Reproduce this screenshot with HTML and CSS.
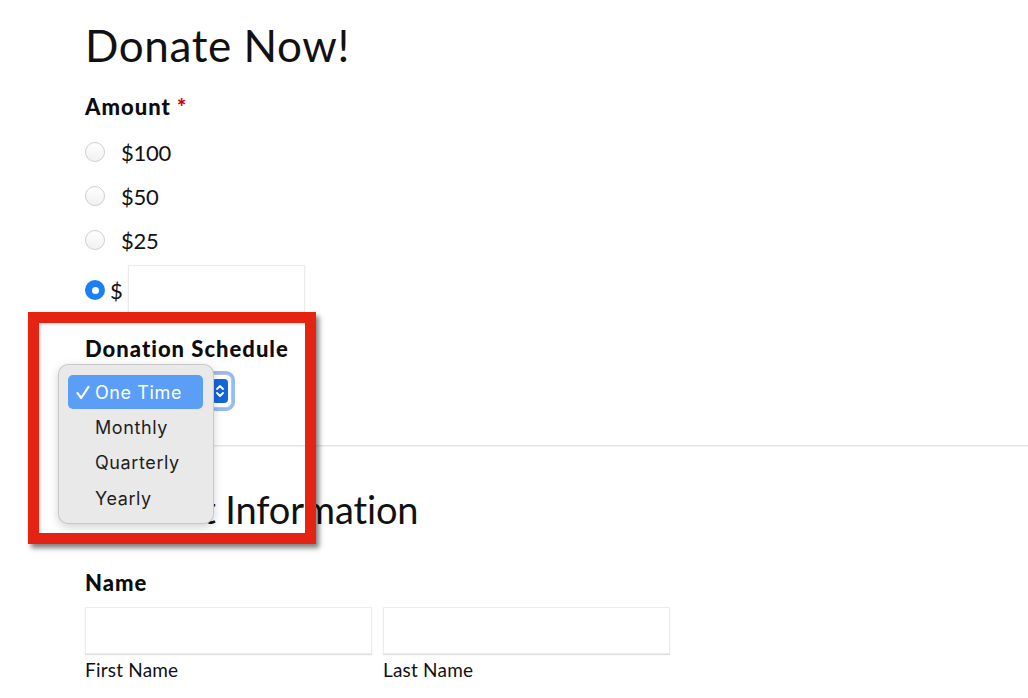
FILE: index.html
```html
<!DOCTYPE html>
<html lang="en">
<head>
<meta charset="utf-8">
<title>Donate Now!</title>
<link rel="stylesheet" href="styles.css">
</head>
<body>
<main class="page">
  <h1 class="title">Donate Now!</h1>

  <div class="label">Amount <span class="req">*</span></div>
  <div class="choices">
    <label class="choice"><span class="radio"></span><span class="choice-text">$100</span></label>
    <label class="choice"><span class="radio"></span><span class="choice-text">$50</span></label>
    <label class="choice"><span class="radio"></span><span class="choice-text">$25</span></label>
    <label class="choice custom"><span class="radio checked"></span><span class="dollar">$</span><span class="field amount-field"></span></label>
  </div>

  <div class="label schedule-label">Donation Schedule</div>
  <div class="select">
    <span class="select-value">One Time</span>
    <span class="select-arrow">
      <svg width="8" height="14" viewBox="0 0 8 14"><path d="M1 5 L4 2 L7 5 M1 9 L4 12 L7 9" fill="none" stroke="#fff" stroke-width="1.8" stroke-linecap="round" stroke-linejoin="round"/></svg>
    </span>
  </div>

  <hr class="divider">

  <h2 class="subtitle">Contact Information</h2>

  <div class="label name-label">Name</div>
  <div class="name-row">
    <div class="name-col"><span class="field name-field"></span><span class="sub">First Name</span></div>
    <div class="name-col"><span class="field name-field"></span><span class="sub">Last Name</span></div>
  </div>
</main>

<div class="menu">
  <div class="menu-item active"><span class="check"><svg width="14" height="15" viewBox="0 0 14 15"><path d="M1.5 8.2 L5.2 13 L12.5 1.8" fill="none" stroke="#fff" stroke-width="2.2" stroke-linecap="round" stroke-linejoin="round"/></svg></span>One Time</div>
  <div class="menu-item">Monthly</div>
  <div class="menu-item">Quarterly</div>
  <div class="menu-item">Yearly</div>
</div>

<div class="highlight-box"></div>
</body>
</html>
```

FILE: styles.css
```css
* { box-sizing: border-box; }
html, body { margin: 0; padding: 0; background: #fff; }
body {
  font-family: Lato, "Open Sans", sans-serif;
  color: #111;
  width: 1028px;
  height: 698px;
  overflow: hidden;
  position: relative;
}
.page {
  padding-left: 85px;
  padding-top: 19px;
}
.title {
  margin: 0;
  font-size: 44px;
  font-weight: 400;
  line-height: 53px;
  letter-spacing: 0.6px;
  color: #111;
}
.label {
  font-size: 22px;
  font-weight: 900;
  line-height: 25px;
  letter-spacing: 1px;
  color: #0c0c0c;
}
.title + .label { margin-top: 22px; }
.req { color: #c00; }
.choices {
  margin-top: 11px;
  display: flex;
  flex-direction: column;
}
.choice {
  display: flex;
  align-items: center;
  height: 44px;
}
.radio {
  width: 20px;
  height: 20px;
  border-radius: 50%;
  border: 1px solid #cfcfcf;
  background: linear-gradient(#ffffff, #f1f1f1);
  flex: none;
}
.radio.checked {
  border: none;
  background: #1b7ff9;
  position: relative;
}
.radio.checked::after {
  content: "";
  position: absolute;
  left: 6.5px;
  top: 6.5px;
  width: 7px;
  height: 7px;
  border-radius: 50%;
  background: #fff;
}
.choice-text {
  margin-left: 16px;
  font-size: 22px;
  letter-spacing: -0.3px;
}
.custom {
  height: 52px;
  margin-top: 2px;
}
.dollar {
  margin-left: 5px;
  font-size: 22px;
}
.field {
  display: block;
  border: 1px solid #ececec;
  box-shadow: 0 1px 1px rgba(0,0,0,0.12);
  background: #fff;
}
.amount-field {
  margin-left: 5px;
  width: 177px;
  height: 50px;
}
.schedule-label { margin-top: 20px; }
.select {
  margin-top: 13px;
  margin-left: -10px;
  width: 157px;
  height: 34px;
  border: 1px solid #c4c4c4;
  border-radius: 6px;
  box-shadow: 0 0 0 3px rgba(60,130,240,0.55);
  display: flex;
  align-items: center;
  justify-content: space-between;
  padding: 0 3px 0 10px;
  background: #fff;
  font-family: Inter, sans-serif;
  font-size: 16px;
}
.select-arrow {
  width: 16px;
  height: 24px;
  border-radius: 4px;
  background: #1665d8;
  display: flex;
  align-items: center;
  justify-content: center;
}
.divider {
  margin: 37px 0 0 0;
  border: none;
  border-top: 1px solid #e3e3e3;
  border-bottom: 1px solid #f2f2f2;
  width: 943px;
}
.subtitle {
  margin: 40px 0 0 0;
  font-size: 38px;
  font-weight: 400;
  line-height: 44px;
  letter-spacing: -0.15px;
  color: #111;
}
.name-label { margin-top: 39px; }
.name-row {
  margin-top: 12px;
  display: flex;
  gap: 11px;
}
.name-col {
  display: flex;
  flex-direction: column;
  width: 287px;
}
.name-field { height: 47px; }
.sub {
  font-size: 19px;
  line-height: 24px;
  margin-top: 4px;
  letter-spacing: 0.2px;
  color: #111;
}
.menu {
  position: absolute;
  left: 58px;
  top: 364px;
  width: 156px;
  height: 160px;
  padding: 10px 10px 10px 9px;
  border-radius: 10px;
  background: #e9e9e9;
  border: 1px solid rgba(0,0,0,0.14);
  box-shadow: 0 3px 10px rgba(0,0,0,0.18);
  font-family: Inter, "Liberation Sans", sans-serif;
  font-size: 18px;
  color: #1e1e1e;
}
.menu-item {
  height: 35.3px;
  display: flex;
  align-items: center;
  padding-left: 27px;
  letter-spacing: 0.6px;
}
.menu-item.active {
  height: 34px;
  background: #5a9ef8;
  color: #fff;
  border-radius: 5px;
  padding-left: 8px;
  margin-bottom: 1px;
}
.check {
  width: 19px;
  height: 15px;
  display: flex;
  align-items: center;
}
.highlight-box {
  position: absolute;
  left: 28px;
  top: 312px;
  width: 288px;
  height: 232px;
  border: 11px solid #e52313;
  box-shadow: 3px 4px 5px rgba(0,0,0,0.5), inset 2px 2px 3px rgba(0,0,0,0.12);
}
```
